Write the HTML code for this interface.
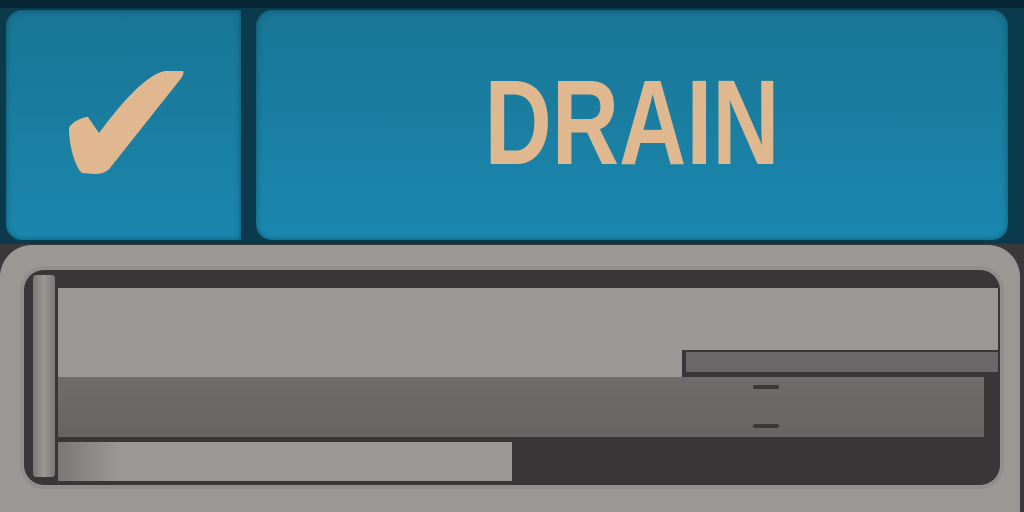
<!DOCTYPE html>
<html><head><style>
*{margin:0;padding:0}
body{width:1024px;height:512px;overflow:hidden;background:#3a3838;position:relative;font-family:"Liberation Sans",sans-serif}
div{position:absolute}
</style></head><body>
<div style="left:0;top:0;width:1024px;height:244px;background:#0b3a4d"></div>
<div style="left:0;top:0;width:1024px;height:8px;background:#072633"></div>
<div style="left:6px;top:10px;width:235px;height:230px;background:linear-gradient(#197594,#1a87ae);border-radius:16px 0 0 16px;box-shadow:inset 0 0 6px rgba(0,40,60,.5)"></div>
<div style="left:256px;top:10px;width:752px;height:230px;background:linear-gradient(#197594,#1a88b0);border-radius:16px;box-shadow:inset 0 0 6px rgba(0,40,60,.5)"></div>
<svg style="position:absolute;left:0;top:0" width="300" height="250"><path d="M69,128 C72,122 82,117 88,117 L99,133 C120,105 145,75 165,71 L183,71 C185,74 180,80 175,86 L110,168 C106,173 100,174 94,174 L82,173 C76,168 69,148 69,128 Z" fill="#e0b78f"/></svg>
<div style="left:632px;top:62px;width:0;height:0"><div style="left:-200px;width:400px;text-align:center;font-weight:bold;font-size:121px;line-height:121px;color:#e0b88f;transform:scaleX(0.77)">DRAIN</div></div>
<div style="left:0;top:245px;width:1020px;height:267px;background:#9a9794;border-radius:32px 32px 0 0"></div>
<div style="left:20px;top:266px;width:984px;height:223px;background:#918e8c;border-radius:24px"></div>
<div style="left:24px;top:270px;width:976px;height:215px;background:#383637;border-radius:20px"></div>
<div style="left:33px;top:275px;width:22px;height:202px;background:linear-gradient(90deg,#7a7776,#9a9794,#7a7776);border-radius:3px"></div>
<div style="left:58px;top:288px;width:940px;height:62px;background:#9a9794"></div>
<div style="left:58px;top:350px;width:624px;height:27px;background:#9a9794"></div>
<div style="left:686px;top:352px;width:312px;height:20px;background:#6a6868"></div>
<div style="left:58px;top:377px;width:926px;height:60px;background:linear-gradient(#6f6c6b,#676464)"></div>
<div style="left:753px;top:385px;width:26px;height:4px;background:#3a3838;border-radius:3px"></div>
<div style="left:753px;top:424px;width:26px;height:4px;background:#3a3838;border-radius:3px"></div>
<div style="left:58px;top:442px;width:454px;height:39px;background:linear-gradient(90deg,#7a7776,#9a9794 60px,#9a9794)"></div>
</body></html>
